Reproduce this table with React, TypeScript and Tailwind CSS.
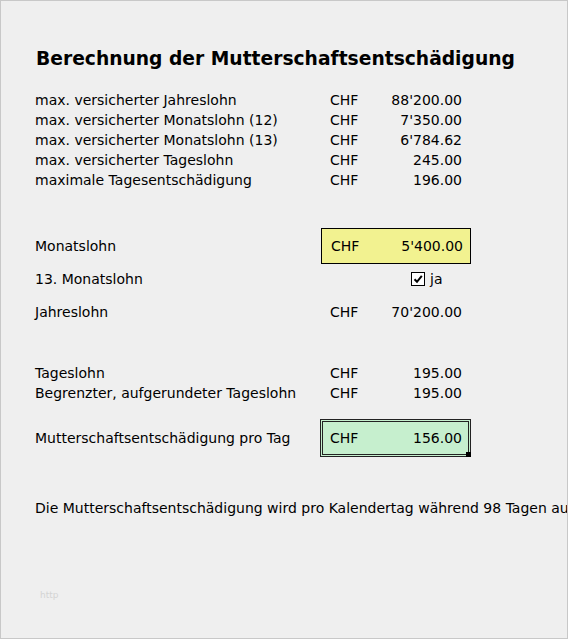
import { Fragment } from 'react';

const MAX_ROWS: [string, string][] = [
  ['max. versicherter Jahreslohn', "88'200.00"],
  ['max. versicherter Monatslohn (12)', "7'350.00"],
  ['max. versicherter Monatslohn (13)', "6'784.62"],
  ['max. versicherter Tageslohn', '245.00'],
  ['maximale Tagesentschädigung', '196.00'],
];

function Row({ label, value }: { label: string; value: string }) {
  return (
    <div className="flex h-5 items-center">
      <span className="w-[295px]">{label}</span>
      <span className="w-[40px]">CHF</span>
      <span className="w-[92px] text-right">{value}</span>
    </div>
  );
}

export default function App() {
  return (
    <div
      className="w-[568px] h-[639px] overflow-hidden border border-[#c8c8c8] bg-[#efefef] text-[14px] text-black"
      style={{ fontFamily: '"DejaVu Sans", Verdana, sans-serif' }}
    >
      <div className="pl-[34px] pt-[46px] whitespace-nowrap">
        <h1 className="text-[18.7px] font-bold leading-6 mb-[19px] ml-px">Berechnung der Mutterschaftsentschädigung</h1>

        {MAX_ROWS.map(([l, v]) => (
          <Fragment key={l}>
            <Row label={l} value={v} />
          </Fragment>
        ))}

        <div className="mt-[38px] flex items-center h-9">
          <span className="w-[286px]">Monatslohn</span>
          <div className="w-[150px] h-9 border border-black bg-[#f2f290] flex items-center justify-between pl-[9px] pr-[7px]">
            <span>CHF</span>
            <span>5'400.00</span>
          </div>
        </div>

        <div className="mt-[3px] flex items-center h-6">
          <span className="w-[376px]">13. Monatslohn</span>
          <span className="w-[14px] h-[14px] border border-black bg-white flex items-center justify-center">
            <svg width="10" height="10" viewBox="0 0 10 10">
              <path d="M1.5 5.2 L4 7.8 L8.8 1.8" fill="none" stroke="black" strokeWidth="2" />
            </svg>
          </span>
          <span className="ml-[5px]">ja</span>
        </div>

        <div className="mt-[11px]">
          <Row label="Jahreslohn" value="70'200.00" />
        </div>

        <div className="mt-[41px]">
          <Row label="Tageslohn" value="195.00" />
          <Row label="Begrenzter, aufgerundeter Tageslohn" value="195.00" />
        </div>

        <div className="mt-[16px] flex items-center h-[38px]">
          <span className="w-[285px]">Mutterschaftsentschädigung pro Tag</span>
          <div className="relative w-[151px] h-[38px] border-[3px] border-double border-[#222] bg-[#c6efce]">
            <div className="h-full flex items-center justify-between pl-[7px] pr-[6px]">
              <span>CHF</span>
              <span>156.00</span>
            </div>
            <span className="absolute -right-[3px] -bottom-[3px] w-[5px] h-[5px] bg-black" />
          </div>
        </div>

        <p className="mt-[41px] leading-5">
          Die Mutterschaftsentschädigung wird pro Kalendertag während 98 Tagen au
        </p>

        <p className="mt-[71px] ml-[5px] text-[9px] text-[#d4d4d4]">http</p>
      </div>
    </div>
  );
}
